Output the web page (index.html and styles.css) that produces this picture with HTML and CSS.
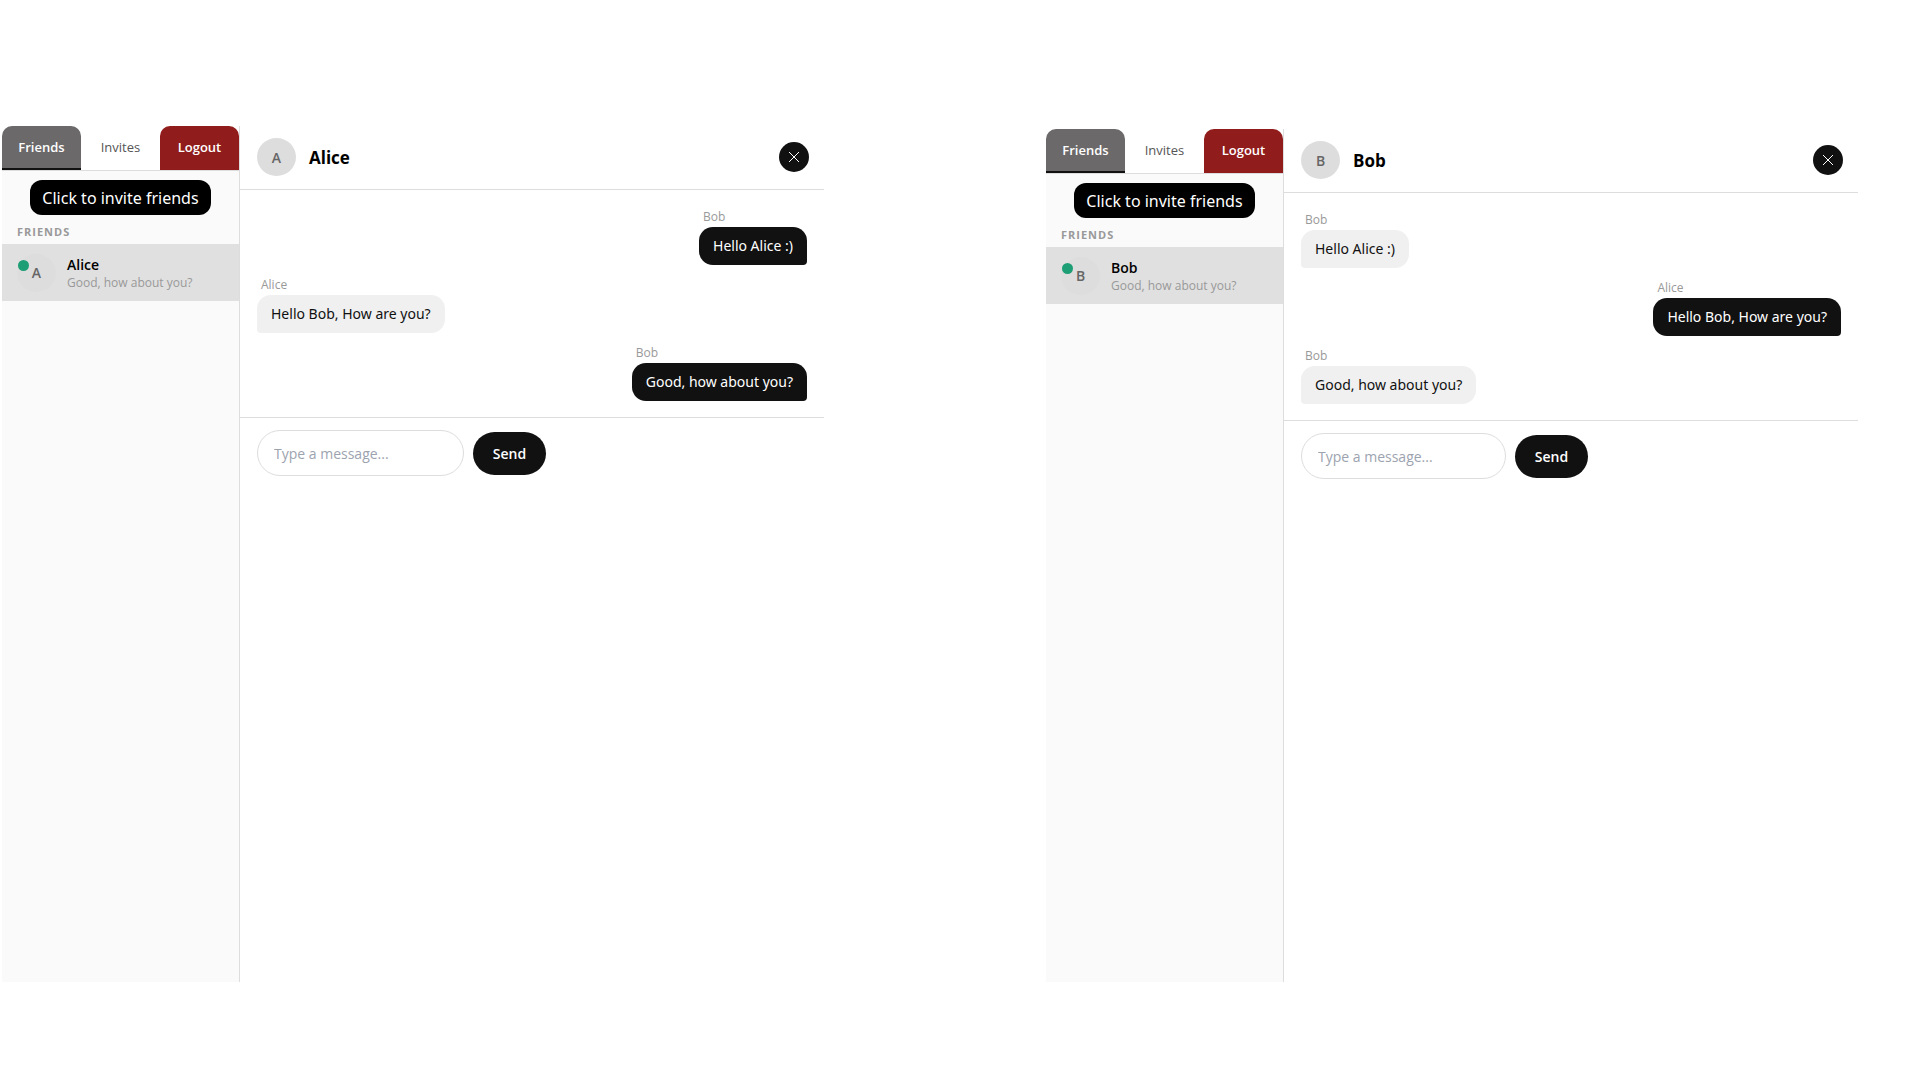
FILE: index.html
```html
<!DOCTYPE html>
<html lang="en">
<head>
    <meta charset="UTF-8">
    <meta name="viewport" content="width=device-width, initial-scale=1.0">
    <title>Chat</title>
    <link rel="stylesheet" href="styles.css">
</head>
<body>

<main class="page">
    <section class="app">
        <aside class="sidebar">
            <nav class="tabs">
                <button type="button" class="tab active">Friends</button>
                <button type="button" class="tab">Invites</button>
                <button type="button" class="tab logout">Logout</button>
            </nav>
            <button type="button" class="invite-btn">Click to invite friends</button>
            <h3 class="list-title">Friends</h3>
            <a href="#alice" class="friend">
                <span class="avatar">A<span class="online"></span></span>
                <span class="friend-info">
                    <span class="friend-name">Alice</span>
                    <span class="friend-last">Good, how about you?</span>
                </span>
            </a>
        </aside>
        <div class="chat">
            <header class="chat-header">
                <span class="avatar">A</span>
                <h2>Alice</h2>
                <button type="button" class="close-btn" aria-label="Close chat">
                    <svg width="12" height="12" viewBox="0 0 12 12"><path d="M1 1L11 11M11 1L1 11"/></svg>
                </button>
            </header>
            <div class="messages">
                <div class="message sent">
                    <span class="sender">Bob</span>
                    <p class="bubble">Hello Alice :)</p>
                </div>
                <div class="message">
                    <span class="sender">Alice</span>
                    <p class="bubble">Hello Bob, How are you?</p>
                </div>
                <div class="message sent">
                    <span class="sender">Bob</span>
                    <p class="bubble">Good, how about you?</p>
                </div>
            </div>
            <form class="composer">
                <input type="text" name="message" placeholder="Type a message..." aria-label="Message to Alice">
                <button type="button" class="send-btn">Send</button>
            </form>
        </div>
    </section>

    <section class="app app-second">
        <aside class="sidebar">
            <nav class="tabs">
                <button type="button" class="tab active">Friends</button>
                <button type="button" class="tab">Invites</button>
                <button type="button" class="tab logout">Logout</button>
            </nav>
            <button type="button" class="invite-btn">Click to invite friends</button>
            <h3 class="list-title">Friends</h3>
            <a href="#bob" class="friend">
                <span class="avatar">B<span class="online"></span></span>
                <span class="friend-info">
                    <span class="friend-name">Bob</span>
                    <span class="friend-last">Good, how about you?</span>
                </span>
            </a>
        </aside>
        <div class="chat">
            <header class="chat-header">
                <span class="avatar">B</span>
                <h2>Bob</h2>
                <button type="button" class="close-btn" aria-label="Close chat">
                    <svg width="12" height="12" viewBox="0 0 12 12"><path d="M1 1L11 11M11 1L1 11"/></svg>
                </button>
            </header>
            <div class="messages">
                <div class="message">
                    <span class="sender">Bob</span>
                    <p class="bubble">Hello Alice :)</p>
                </div>
                <div class="message sent">
                    <span class="sender">Alice</span>
                    <p class="bubble">Hello Bob, How are you?</p>
                </div>
                <div class="message">
                    <span class="sender">Bob</span>
                    <p class="bubble">Good, how about you?</p>
                </div>
            </div>
            <form class="composer">
                <input type="text" name="message" placeholder="Type a message..." aria-label="Message to Bob">
                <button type="button" class="send-btn">Send</button>
            </form>
        </div>
    </section>
</main>

</body>
</html>
```
FILE: styles.css
```css
* {
    box-sizing: border-box;
}
body {
    margin: 0;
    background-color: #fff;
    color: #111;
    font-family: "Segoe UI", "Open Sans", "Noto Sans", sans-serif;
    font-size: 14px;
}
h2, h3, p {
    margin: 0;
}
button, input {
    font-family: inherit;
}
button {
    border: none;
    padding: 0;
    cursor: pointer;
}

.page {
    display: grid;
    grid-template-columns: 822fr 812fr;
    column-gap: 222px;
    min-height: 100vh;
    padding: 126px 62px 98px 2px;
}
.app {
    display: flex;
}
.app-second {
    margin-top: 3px;
}

/* sidebar */
.sidebar {
    display: flex;
    flex-direction: column;
    flex: 0 0 238px;
    background-color: #fafafa;
    border-right: 1px solid #ddd;
}
.tabs {
    display: flex;
    background-color: #fff;
    border-bottom: 1px solid #ddd;
}
.tab {
    flex: 1;
    height: 44px;
    background: none;
    border-bottom: 2px solid transparent;
    color: #555;
    font-size: 13px;
}
.tab.active {
    background-color: #6b6969;
    border-bottom-color: #111;
    border-radius: 10px 10px 0 0;
    color: #fff;
    font-weight: 600;
}
.tab.logout {
    background-color: #911c1c;
    border-bottom-color: #911c1c;
    border-radius: 10px 10px 0 0;
    color: #fff;
    font-weight: 600;
}
.invite-btn {
    align-self: center;
    height: 35px;
    margin-top: 9px;
    padding: 0 12px;
    background-color: #000;
    border-radius: 12px;
    color: #fff;
    font-family: "Segoe UI", "Noto Sans", sans-serif;
    font-size: 16px;
}
.list-title {
    padding: 9px 15px 4px;
    color: #999;
    font-size: 11px;
    font-weight: 700;
    letter-spacing: 1px;
    line-height: 16px;
    text-transform: uppercase;
}
.friend {
    display: flex;
    align-items: center;
    gap: 11px;
    height: 57px;
    padding: 0 15px;
    background-color: #e0e0e0;
    color: #000;
    text-decoration: none;
}
.avatar {
    position: relative;
    display: flex;
    flex: none;
    align-items: center;
    justify-content: center;
    width: 39px;
    height: 38px;
    background-color: #ddd;
    border-radius: 50%;
    color: #666;
    font-weight: 600;
}
.online {
    position: absolute;
    top: 6px;
    left: 1px;
    width: 11px;
    height: 11px;
    background-color: #1d9e75;
    border-radius: 50%;
}
.friend-info {
    display: flex;
    flex-direction: column;
}
.friend-name {
    font-weight: 600;
    line-height: 19px;
}
.friend-last {
    color: #999;
    font-size: 12px;
    line-height: 17px;
}

/* chat */
.chat {
    flex: 1;
}
.chat-header {
    display: flex;
    align-items: center;
    gap: 13px;
    padding: 12px 15px 13px 17px;
    border-bottom: 1px solid #ddd;
}
.chat-header h2 {
    color: #000;
    font-size: 17px;
    font-weight: 700;
}
.close-btn {
    display: flex;
    align-items: center;
    justify-content: center;
    width: 30px;
    height: 30px;
    margin-left: auto;
    background-color: #111;
    border-radius: 50%;
}
.close-btn svg {
    fill: none;
    stroke: #fff;
}
.messages {
    display: flex;
    flex-direction: column;
    align-items: flex-start;
    gap: 11px;
    padding: 18px 17px 16px;
    border-bottom: 1px solid #ddd;
}
.message.sent {
    align-self: flex-end;
}
.sender {
    display: block;
    padding: 0 4px 2px;
    color: #999;
    font-size: 12px;
    line-height: 17px;
}
.bubble {
    padding: 8px 14px;
    background-color: #f0f0f0;
    border-radius: 14px 14px 14px 4px;
    font-family: "Segoe UI", "Noto Sans", sans-serif;
    line-height: 22px;
}
.sent .bubble {
    background-color: #111;
    border-radius: 14px 14px 4px 14px;
    color: #fff;
}
.composer {
    display: flex;
    align-items: center;
    gap: 9px;
    padding: 12px 17px;
}
.composer input {
    width: 207px;
    height: 46px;
    padding: 0 16px;
    border: 1px solid #ddd;
    border-radius: 23px;
    font-size: 14px;
}
.app-second .composer input {
    width: 205px;
}
.composer input::placeholder {
    color: #9ca3af;
}
.send-btn {
    width: 73px;
    height: 43px;
    background-color: #111;
    border-radius: 22px;
    color: #fff;
    font-size: 14px;
    font-weight: 600;
}
```
